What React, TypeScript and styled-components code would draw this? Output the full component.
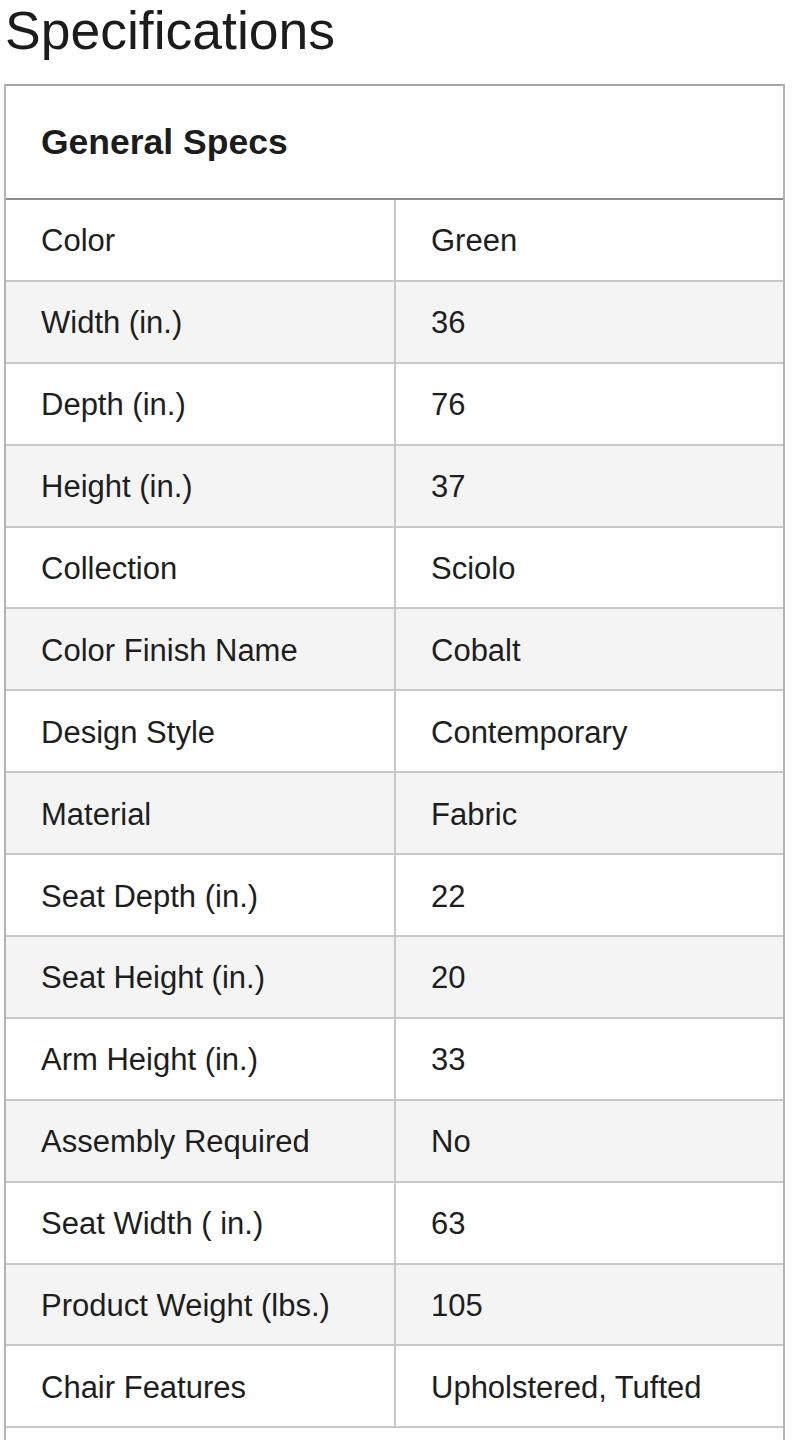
import React from 'react';
import styled, { createGlobalStyle } from 'styled-components';

interface Spec {
  label: string;
  value: string;
}

const specs: Spec[] = [
  { label: 'Color', value: 'Green' },
  { label: 'Width (in.)', value: '36' },
  { label: 'Depth (in.)', value: '76' },
  { label: 'Height (in.)', value: '37' },
  { label: 'Collection', value: 'Sciolo' },
  { label: 'Color Finish Name', value: 'Cobalt' },
  { label: 'Design Style', value: 'Contemporary' },
  { label: 'Material', value: 'Fabric' },
  { label: 'Seat Depth (in.)', value: '22' },
  { label: 'Seat Height (in.)', value: '20' },
  { label: 'Arm Height (in.)', value: '33' },
  { label: 'Assembly Required', value: 'No' },
  { label: 'Seat Width ( in.)', value: '63' },
  { label: 'Product Weight (lbs.)', value: '105' },
  { label: 'Chair Features', value: 'Upholstered, Tufted' },
];

const GlobalStyle = createGlobalStyle`
  body {
    margin: 0;
    background: #ffffff;
    font-family: "Liberation Sans", Arial, Helvetica, sans-serif;
    color: #1e1e1e;
  }
`;

const Page = styled.div`
  padding: 0 13px 0 4px;
  overflow: hidden;
  height: 1440px;
`;

const Title = styled.h1`
  margin: 0 0 23px 1px;
  font-size: 53.5px;
  font-weight: 400;
  line-height: 61px;
  color: #1c1c1c;
`;

const SpecTable = styled.div`
  border-left: 2px solid #b4b4b4;
  border-right: 2px solid #b4b4b4;
`;

const SectionHeader = styled.div`
  height: 112px;
  display: flex;
  align-items: center;
  padding-left: 35px;
  border-top: 2px solid #a6a6a6;
  border-bottom: 2px solid #8c8c8c;
  font-size: 35.5px;
  font-weight: 700;
  color: #1c1c1c;
`;

const Row = styled.div<{ $shaded: boolean }>`
  display: grid;
  grid-template-columns: 388px 1fr;
  height: 79.9px;
  border-bottom: 2px solid #c8c8c8;
  background: ${p => (p.$shaded ? '#f4f4f4' : '#ffffff')};
`;

const Cell = styled.div<{ $divider?: boolean }>`
  display: flex;
  align-items: center;
  padding: 3px 0 0 35px;
  border-left: ${p => (p.$divider ? '2px solid #c8c8c8' : 'none')};
  font-size: 31px;
  color: #1e1e1e;
`;

const NextSection = styled.div`
  height: 40px;
`;

const App: React.FC = () => {
  return (
    <>
      <GlobalStyle />
      <Page>
        <Title>Specifications</Title>
        <SpecTable>
          <SectionHeader>General Specs</SectionHeader>
          {specs.map((spec, index) => (
            <Row key={spec.label} $shaded={index % 2 === 1}>
              <Cell>{spec.label}</Cell>
              <Cell $divider>{spec.value}</Cell>
            </Row>
          ))}
          <NextSection />
        </SpecTable>
      </Page>
    </>
  );
};

export default App;
